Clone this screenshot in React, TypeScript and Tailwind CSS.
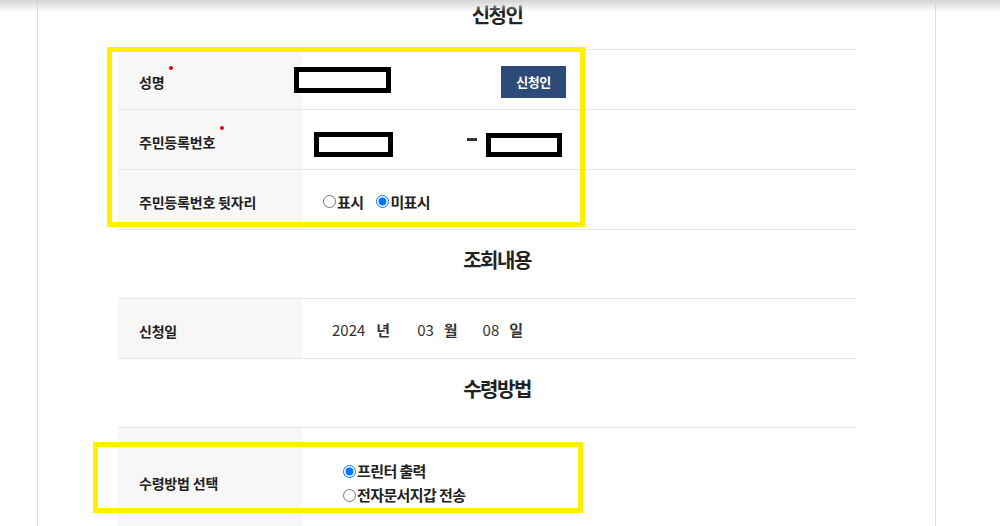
import React from "react";

const FONT = "font-['Noto_Sans_CJK_KR','Noto_Sans',sans-serif]";

function Title({ children, first }: { children: React.ReactNode; first?: boolean }) {
  return (
    <div
      className={`${first ? "h-[49px] pt-[3px]" : "h-[68px] pt-[18px]"} pl-[20px] text-center text-[20px] leading-[24px] font-bold tracking-[-1.5px] text-[#222]`}
    >
      {children}
    </div>
  );
}

function Label({ children, required }: { children: React.ReactNode; required?: boolean }) {
  return (
    <div className="flex w-[184px] shrink-0 items-center bg-[#f7f7f7] pl-[21px] pt-[6px]">
      <span className="relative text-[14px] font-bold tracking-[-0.2px] text-[#222]">
        {children}
        {required && (
          <span className="absolute -right-[9px] -top-[6px] h-[4px] w-[4px] rounded-full bg-[#e60012]" />
        )}
      </span>
    </div>
  );
}

function Radio({ label, checked, name }: { label: string; checked?: boolean; name: string }) {
  return (
    <label className="flex items-center text-[15px] leading-[20px] font-bold tracking-[-0.6px] text-[#222]">
      <input type="radio" name={name} defaultChecked={checked} className="m-0 mr-[1px] h-[13px] w-[13px]" />
      {label}
    </label>
  );
}

function Redacted({ className }: { className: string }) {
  return <div className={`shrink-0 border-[5px] border-black bg-white ${className}`} />;
}

export default function App() {
  return (
    <div className={`relative h-[526px] w-[1000px] overflow-hidden bg-white ${FONT}`}>
      <div className="ml-[37px] h-full w-[899px] border-x border-[#dcdcdc]">
        <div className="ml-[80px] w-[738px]">
          <Title first>신청인</Title>
          <div className="border-t border-[#e6e6e6]">
            <div className="flex h-[60px] border-b border-[#e6e6e6]">
              <Label required>성명</Label>
              <div className="flex items-center">
                <Redacted className="-ml-[8px] h-[26px] w-[97px]" />
                <button className="ml-[110px] mt-[5px] h-[32px] w-[65px] bg-[#2e4a78] text-[13px] font-bold tracking-[-0.5px] text-white">
                  신청인
                </button>
              </div>
            </div>
            <div className="flex h-[60px] border-b border-[#e6e6e6]">
              <Label required>주민등록번호</Label>
              <div className="flex items-start">
                <Redacted className="ml-[12px] mt-[22px] h-[25px] w-[79px]" />
                <div className="ml-[74px] mt-[28px] h-[3px] w-[10px] bg-[#333]" />
                <Redacted className="ml-[9px] mt-[23px] h-[24px] w-[76px]" />
              </div>
            </div>
            <div className="flex h-[60px] border-b border-[#e6e6e6]">
              <Label>주민등록번호 뒷자리</Label>
              <div className="flex items-center gap-[13px] pl-[21px] pt-[4px]">
                <Radio name="rrn" label="표시" />
                <Radio name="rrn" label="미표시" checked />
              </div>
            </div>
          </div>

          <Title>조회내용</Title>
          <div className="border-t border-[#e6e6e6]">
            <div className="flex h-[60px] border-b border-[#e6e6e6]">
              <Label>신청일</Label>
              <div className="flex items-center pl-[30px] pt-[4px] text-[15px] text-[#333]">
                <span>2024</span>
                <span className="ml-[11px] font-bold">년</span>
                <span className="ml-[27px]">03</span>
                <span className="ml-[10px] font-bold">월</span>
                <span className="ml-[25px]">08</span>
                <span className="ml-[10px] font-bold">일</span>
              </div>
            </div>
          </div>

          <Title>수령방법</Title>
          <div className="border-t border-[#e6e6e6]">
            <div className="flex h-[105px] border-b border-[#e6e6e6]">
              <Label>수령방법 선택</Label>
              <div className="flex flex-col justify-center gap-[4px] pl-[41px] pt-[6px]">
                <Radio name="recv" label="프린터 출력" checked />
                <Radio name="recv" label="전자문서지갑 전송" />
              </div>
            </div>
          </div>
        </div>
      </div>

      <div className="pointer-events-none absolute left-0 right-0 top-0 h-[12px] bg-linear-to-b from-[#d4d4d4] to-white/0" />
      <div className="pointer-events-none absolute left-[107px] top-[47px] h-[180px] w-[478px] border-[5px] border-[#fff000]" />
      <div className="pointer-events-none absolute left-[93px] top-[442px] h-[71px] w-[490px] border-[5px] border-[#fff000]" />
    </div>
  );
}
